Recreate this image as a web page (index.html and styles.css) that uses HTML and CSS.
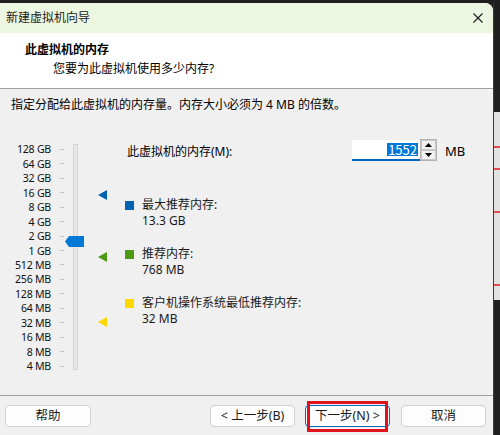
FILE: index.html
```html
<!DOCTYPE html>
<html lang="zh-CN">
<head>
    <meta charset="UTF-8">
    <meta name="viewport" content="width=device-width, initial-scale=1.0">
    <title>新建虚拟机向导</title>
    <link rel="stylesheet" href="styles.css">
</head>
<body>
    <div class="desktop">
        <div class="wizard">
            <!-- Barra de título -->
            <div class="titlebar">
                <span class="title">新建虚拟机向导</span>
                <svg class="close" width="10" height="10" viewBox="0 0 10 10">
                    <path d="M0.5 0.5 L9.5 9.5 M9.5 0.5 L0.5 9.5" stroke="#1a1a1a" stroke-width="1.1" fill="none"/>
                </svg>
            </div>

            <div class="header">
                <div class="header-title">此虚拟机的内存</div>
                <div class="header-sub">您要为此虚拟机使用多少内存?</div>
            </div>

            <div class="body">
                <p class="intro">指定分配给此虚拟机的内存量。内存大小必须为 4 MB 的倍数。</p>

                <div class="content">
                    <div class="slider">
                        <ul class="scale">
                            <li><span>128 GB</span><i class="tick"></i></li>
                            <li><span>64 GB</span><i class="tick"></i></li>
                            <li><span>32 GB</span><i class="tick"></i></li>
                            <li><span>16 GB</span><i class="tick"></i></li>
                            <li><span>8 GB</span><i class="tick"></i></li>
                            <li><span>4 GB</span><i class="tick"></i></li>
                            <li><span>2 GB</span><i class="tick"></i></li>
                            <li><span>1 GB</span><i class="tick"></i></li>
                            <li><span>512 MB</span><i class="tick"></i></li>
                            <li><span>256 MB</span><i class="tick"></i></li>
                            <li><span>128 MB</span><i class="tick"></i></li>
                            <li><span>64 MB</span><i class="tick"></i></li>
                            <li><span>32 MB</span><i class="tick"></i></li>
                            <li><span>16 MB</span><i class="tick"></i></li>
                            <li><span>8 MB</span><i class="tick"></i></li>
                            <li><span>4 MB</span><i class="tick"></i></li>
                        </ul>
                        <div class="track"></div>
                        <!-- cursor do slider -->
                        <svg class="thumb" width="19" height="11" viewBox="0 0 19 11">
                            <polygon points="4,0 19,0 19,11 4,11 0,5.5" fill="#0078d7"/>
                        </svg>
                        <!-- marcadores: máximo, recomendado, mínimo -->
                        <svg class="marker marker-max" width="9" height="10" viewBox="0 0 9 10">
                            <polygon points="0,5 9,0 9,10" fill="#0063b1"/>
                        </svg>
                        <svg class="marker marker-rec" width="9" height="10" viewBox="0 0 9 10">
                            <polygon points="0,5 9,0 9,10" fill="#4c9a14"/>
                        </svg>
                        <svg class="marker marker-min" width="9" height="10" viewBox="0 0 9 10">
                            <polygon points="0,5 9,0 9,10" fill="#ffd800"/>
                        </svg>
                    </div>

                    <div class="info">
                        <div class="mem-row">
                            <label class="mem-label">此虚拟机的内存(M):</label>
                            <div class="spin-input"><span class="selected">1552</span></div>
                            <div class="spin-btns">
                                <div class="spin-btn">
                                    <svg width="7" height="4" viewBox="0 0 7 4"><polygon points="3.5,0 7,4 0,4" fill="#000"/></svg>
                                </div>
                                <div class="spin-btn">
                                    <svg width="7" height="4" viewBox="0 0 7 4"><polygon points="0,0 7,0 3.5,4" fill="#000"/></svg>
                                </div>
                            </div>
                            <span class="unit">MB</span>
                        </div>

                        <div class="legend">
                            <div class="legend-item">
                                <i class="swatch swatch-max"></i>
                                <div>最大推荐内存:<br>13.3 GB</div>
                            </div>
                            <div class="legend-item">
                                <i class="swatch swatch-rec"></i>
                                <div>推荐内存:<br>768 MB</div>
                            </div>
                            <div class="legend-item">
                                <i class="swatch swatch-min"></i>
                                <div>客户机操作系统最低推荐内存:<br>32 MB</div>
                            </div>
                        </div>
                    </div>
                </div>
            </div>

            <div class="footer">
                <button class="btn btn-help">帮助</button>
                <button class="btn btn-back">&lt; 上一步(B)</button>
                <button class="btn btn-next">下一步(N) &gt;</button>
                <button class="btn btn-cancel">取消</button>
            </div>
        </div>

        <!-- pedaço da janela de trás -->
        <div class="side">
            <div class="side-panel">
                <i class="side-line line1"></i>
                <i class="side-line line2"></i>
                <i class="side-line line3"></i>
                <i class="side-line line4"></i>
            </div>
        </div>
    </div>
</body>
</html>
```

FILE: styles.css
```css
/* Janela do assistente */
* {
    box-sizing: border-box;
}

body {
    margin: 0;
    background-color: #1f1f1f;
    font-family: "Noto Sans", "Noto Sans CJK SC", sans-serif;
    font-size: 12px;
    color: #000;
}

.desktop {
    width: 500px;
    height: 435px;
    padding-top: 3px;
    display: flex;
    overflow: hidden;
}

.wizard {
    width: 493px;
    height: 432px;
    background-color: #f0f0f0;
    border-top-right-radius: 8px;
    display: flex;
    flex-direction: column;
    overflow: hidden;
}

.titlebar {
    height: 30px;
    background-color: #edf6e1;
    display: flex;
    align-items: center;
    justify-content: space-between;
    padding: 0 10px 0 6px;
    color: #1a1a1a;
    line-height: 16px;
}

.header {
    height: 56px;
    background-color: #fff;
    border-bottom: 1px solid #a0a0a0;
    padding-top: 9px;
    line-height: 16px;
}

.header-title {
    font-weight: bold;
    padding-left: 25px;
}

.header-sub {
    padding-left: 53px;
    margin-top: 3px;
}

.body {
    flex: 1;
}

.intro {
    margin: 0;
    padding: 8px 0 0 11px;
    line-height: 16px;
}

.content {
    margin-top: 25px;
    display: flex;
}

.slider {
    position: relative;
    width: 125px;
    height: 235px;
}

.scale {
    list-style: none;
    margin: 0;
    padding: 4px 0 0 0;
}

.scale li {
    height: 14.47px;
    display: flex;
    align-items: center;
    font-size: 10.6px;
    letter-spacing: -0.25px;
    color: #111;
}

.scale span {
    width: 51px;
    text-align: right;
    white-space: nowrap;
}

.tick {
    width: 4px;
    height: 1px;
    margin-left: 9px;
    background-color: #c4c4c4;
}

.track {
    position: absolute;
    left: 73px;
    top: 6px;
    width: 5px;
    height: 226px;
    background-color: #e7e7e7;
    border: 1px solid #d4d4d4;
}

.thumb {
    position: absolute;
    left: 65px;
    top: 98px;
}

.marker {
    position: absolute;
    left: 98px;
}

.marker-max { top: 52px; }
.marker-rec { top: 114px; }
.marker-min { top: 179px; }

.info {
    flex: 1;
}

.mem-row {
    margin-top: 2px;
    height: 21px;
    display: flex;
    align-items: center;
}

.mem-label {
    width: 227px;
    padding-left: 2px;
}

.spin-input {
    width: 68px;
    height: 21px;
    background-color: #fff;
    border-bottom: 2px solid #0067c0;
    display: flex;
    justify-content: flex-end;
    align-items: center;
    padding-right: 2px;
}

.selected {
    background-color: #0078d7;
    color: #fff;
    font-family: "Noto Sans CJK SC", sans-serif;
    font-size: 13px;
    line-height: 13px;
    padding: 0 1px;
}

.spin-btns {
    width: 17px;
    height: 22px;
    margin-top: -1px;
    border: 1px solid #b4b4b4;
    display: flex;
    flex-direction: column;
}

.spin-btn {
    flex: 1;
    display: flex;
    align-items: center;
    justify-content: center;
    background-color: #f0f0f0;
    border: 1px solid #c8c8c8;
}

.unit {
    margin-left: 8px;
    font-size: 13px;
}

.legend {
    margin-top: 36px;
    display: flex;
    flex-direction: column;
    gap: 17px;
    line-height: 16px;
    color: #1a1a1a;
}

.legend-item {
    display: flex;
}

.swatch {
    width: 9px;
    height: 9px;
    margin: 4px 8px 0 0;
}

.swatch-max { background-color: #0063b1; }
.swatch-rec { background-color: #4c9a14; }
.swatch-min { background-color: #ffd800; }

.footer {
    height: 40px;
    border-top: 1px solid #a0a0a0;
    padding: 9px 7px 0 5px;
    display: flex;
    align-items: flex-start;
}

.btn {
    height: 22px;
    width: 85px;
    background-color: #fdfdfd;
    border: 1px solid #d0d0d0;
    border-radius: 4px;
    font-family: inherit;
    font-size: 12.5px;
    color: #1a1a1a;
    padding: 0;
    line-height: 18px;
}

.btn-help {
    width: 86px;
}

.btn-back {
    margin-left: auto;
}

.btn-next {
    margin-left: 10px;
    border-color: #0067c0;
    position: relative;
}

/* destaque vermelho do print */
.btn-next::after {
    content: "";
    position: absolute;
    left: 1px;
    right: 1px;
    top: -5px;
    bottom: -6px;
    border: 3px solid #e0121c;
}

.btn-cancel {
    margin-left: 11px;
}

/* Janela de trás */
.side {
    flex: 1;
    border-left: 1px solid #3a3a3a;
    padding-top: 109px;
}

.side-panel {
    height: 188px;
    background-color: #e2e2e2;
    display: flex;
    flex-direction: column;
}

.side-line {
    height: 2px;
    background-color: #e0505a;
}

.line1 { margin-top: 34px; }
.line2 { margin-top: 20px; }
.line3 { margin-top: 41px; }
.line4 { margin-top: 71px; }
```
